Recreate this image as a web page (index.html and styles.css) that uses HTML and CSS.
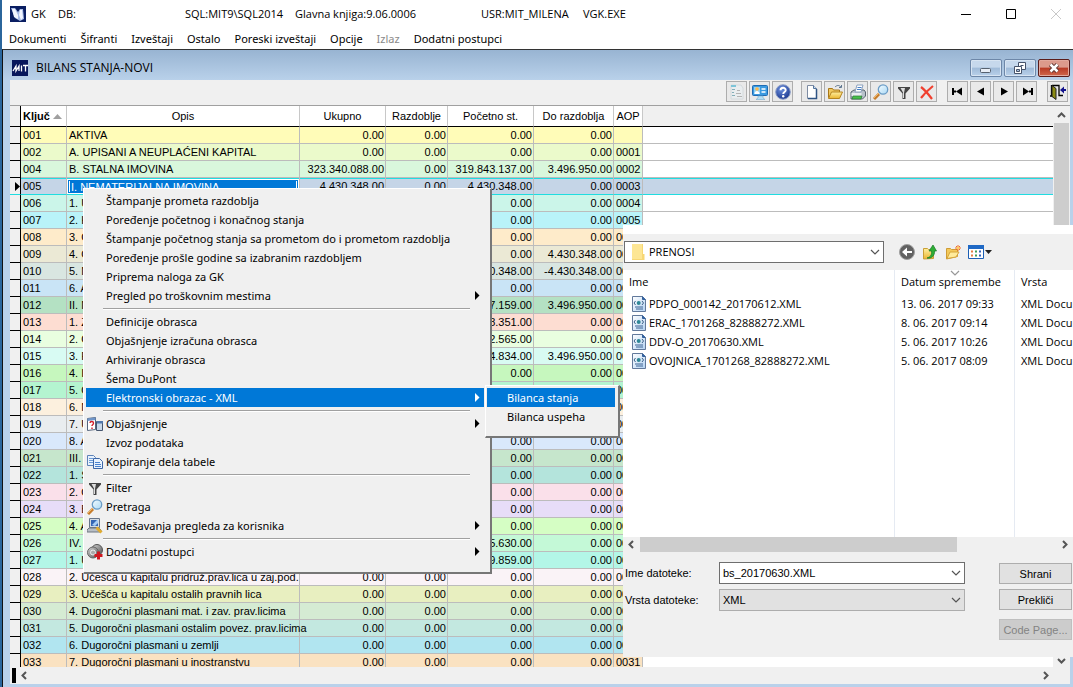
FILE: index.html
```html
<!DOCTYPE html>
<html lang="sr-Latn">
<head>
<meta charset="utf-8">
<title>GK - Bilans stanja</title>
<link rel="stylesheet" href="styles.css">
</head>
<body>
<svg class="defs" aria-hidden="true">
  <defs>
    <linearGradient id="lens" x1="0" y1="0" x2="1" y2="1"><stop offset="0" stop-color="#f4fcff"/><stop offset="1" stop-color="#a9d8f5"/></linearGradient>
    <linearGradient id="gold" x1="0" y1="0" x2="0" y2="1"><stop offset="0" stop-color="#fff0a0"/><stop offset="1" stop-color="#eab530"/></linearGradient>
    <linearGradient id="sheet" x1="0" y1="0" x2="1" y2="1"><stop offset="0" stop-color="#ffffff"/><stop offset="1" stop-color="#b4d2f2"/></linearGradient>
    <radialGradient id="ball" cx=".4" cy=".3" r=".8"><stop offset="0" stop-color="#6d92e0"/><stop offset="1" stop-color="#142f86"/></radialGradient>
    <linearGradient id="metal" x1="0" y1="0" x2="1" y2="1"><stop offset="0" stop-color="#d8d8d8"/><stop offset="1" stop-color="#505050"/></linearGradient>
    <symbol id="i-search" viewBox="0 0 16 16"><path d="M1 15l5-5" stroke="#c77d2c" stroke-width="3"/><path d="M1 14l5-5" stroke="#f1b869" stroke-width="1"/><circle cx="10" cy="5.500" r="4.700" fill="url(#lens)" stroke="#6a9cc6" stroke-width="1.300"/></symbol>
    <symbol id="i-filter" viewBox="0 0 16 16"><path d="M2 3h12v1.500L9.500 9.500V15h-3V9.500L2 4.500z" fill="#444"/><path d="M4.500 4H9L8 9v5H7V8.500z" fill="#ddd"/></symbol>
    <symbol id="i-xml" viewBox="0 0 16 16"><path d="M1.500 .5h10l3 3v12h-13z" fill="url(#sheet)" stroke="#62799b"/><path d="M11.500 .5v3h3" fill="#2d65aa" stroke="#355f98"/><path d="M4.500 5L3 7l1.500 2M11 5l1.500 2L11 9" fill="none" stroke="#3a5f86"/><circle cx="7.700" cy="7" r="2" fill="#2f8796"/><path d="M4 11h8M5 13h7" stroke="#3c6494"/></symbol>
    <symbol id="i-down" viewBox="0 0 10 6"><path d="M1 1l4 4 4-4" fill="none" stroke="#555" stroke-width="1.200"/></symbol>
    <symbol id="i-sub" viewBox="0 0 5 9"><path d="M0 0l4.500 4.500L0 9z" fill="currentColor"/></symbol>
  </defs>
</svg>
<div class="app">
  <header class="titlebar">
    <svg class="app-icon" viewBox="0 0 16 16" aria-hidden="true"><path d="M0 0h16v16H0z" fill="#0a1e62"/><path d="M1 2l4 0 3 4 2-3 3 0 1 10-4 2-5-3z" fill="#a9bde8"/><path d="M2 3l3 0 3 6 0 4-4-2zM10 4l2 0 1 8-2 2-2-5z" fill="#f2f6ff"/></svg>
    <span class="t-gk">GK</span><span class="t-db">DB:</span><span class="t-sql">SQL:MIT9\SQL2014</span><span class="t-ver">Glavna knjiga:9.06.0006</span><span class="t-usr">USR:MIT_MILENA</span><span>VGK.EXE</span>
    <div class="win-buttons">
      <button aria-label="Minimize"><svg viewBox="0 0 12 12"><path d="M1 6.500h10" stroke="#000"/></svg></button>
      <button aria-label="Maximize"><svg viewBox="0 0 12 12"><path d="M1.500 1.500h9v9h-9z" fill="none" stroke="#000"/></svg></button>
      <button aria-label="Close"><svg viewBox="0 0 12 12"><path d="M1 1l10 10M11 1L1 11" stroke="#c8c8c8"/></svg></button>
    </div>
  </header>
  <nav class="menubar">
    <button>Dokumenti</button><button>Šifranti</button><button>Izveštaji</button><button>Ostalo</button><button>Poreski izveštaji</button><button>Opcije</button><button disabled>Izlaz</button><button>Dodatni postupci</button>
  </nav>
  <main class="mdi">
    <div class="mdi-title">
      <svg class="app-icon" viewBox="0 0 16 16" aria-hidden="true"><path d="M0 0h16v16H0z" fill="#07175c"/><path d="M1 11l3-5v5l3-5v5M9.500 5.500v6M11 5.500h5M13.500 5.500v6" fill="none" stroke="#fff" stroke-width="1.300"/></svg>
      <h1>BILANS STANJA-NOVI</h1>
      <div class="mdi-buttons">
        <button aria-label="Minimize child"><svg viewBox="0 0 14 12"><rect x="1.500" y="6.500" width="10" height="4" rx="1" fill="#e8eef6" stroke="#56616f"/></svg></button>
        <button aria-label="Restore child"><svg viewBox="0 0 14 12"><path d="M5.500 .5h7v7h-7z" fill="#fff" stroke="#46536a"/><path d="M7.500 3.500h3" stroke="#46536a"/><path d="M1.500 4.500h7v7h-7z" fill="#fff" stroke="#46536a"/><path d="M3.500 7.500h3v2h-3z" fill="#a8bfdb" stroke="#46536a"/></svg></button>
        <button class="red" aria-label="Close child"><svg viewBox="0 0 14 12"><path d="M3.500 2.500l7 7M10.500 2.500l-7 7" stroke="#5b3430" stroke-width="4.500"/><path d="M3.500 2.500l7 7M10.500 2.500l-7 7" stroke="#fff" stroke-width="2.500"/></svg></button>
      </div>
    </div>
    <div class="mdi-body">
      <div class="toolbar">
        <div class="group">
          <button aria-label="Form"><svg viewBox="0 0 16 16"><path d="M2 1h10l2 3v11H2z" fill="#e9edef" stroke="#d4dadd"/><path d="M2 1h5v2H2z" fill="#7dc4d8"/><path d="M3 5.500h3M3 8.500h2M3 11.500h3" stroke="#83aeb8"/><path d="M8 6.500h3M7 9.500h5M8 12.500h5" stroke="#b4b4b4"/></svg></button>
          <button aria-label="Card"><svg viewBox="0 0 16 16"><rect x=".5" y="1.500" width="15" height="10" rx="1" fill="#3b9ae0" stroke="#1d6bb4"/><path d="M2 3h6v7H2z" fill="#8fd0f5"/><circle cx="5" cy="5" r="1.800" fill="#ffb84a"/><path d="M2.500 10c0-4 5-4 5 0z" fill="#fff"/><path d="M9.500 5h4M9.500 8h4" stroke="#fff" stroke-width="1.500"/><path d="M6 12h5v2l2 1.500H4L6 14z" fill="#b6dff5" stroke="#79afd0" stroke-width=".6"/></svg></button>
          <button aria-label="Help"><svg viewBox="0 0 16 16"><circle cx="8" cy="8" r="7.300" fill="url(#ball)" stroke="#8fa0c8"/><path d="M5.500 6.300C5.500 3 10.700 3 10.700 6.200 10.700 8 8.200 8 8.200 10" fill="none" stroke="#fff" stroke-width="1.900"/><circle cx="8.200" cy="12.300" r="1.200" fill="#fff"/></svg></button>
        </div>
        <div class="group">
          <button aria-label="New"><svg viewBox="0 0 16 16"><path d="M3.500 1.500h6l3 3v10h-9z" fill="#fff" stroke="#7d8ba2"/><path d="M12.500 5v9.500H4" fill="none" stroke="#2f5484" stroke-width="1.500"/><path d="M9.500 1.500v3h3" fill="#c5dcf4" stroke="#55749b"/></svg></button>
          <button aria-label="Open"><svg viewBox="0 0 16 16"><path d="M1.500 13.500v-9h4l1 1.500h6v7.500z" fill="#f0c860" stroke="#a87718"/><path d="M1.500 14.500L4.500 8h11l-3 6.500z" fill="url(#gold)" stroke="#b5841f"/><path d="M8 3c2-2 4-2 6 0M14.500 1v2.500H12" fill="none" stroke="#5e7690"/></svg></button>
          <button aria-label="Print"><svg viewBox="0 0 16 16"><path d="M1 8l3-2h10l1.500 2v4l-3 3H1z" fill="#b8c2cb" stroke="#596470"/><path d="M5 8l2-7h6l-2 7z" fill="#fff" stroke="#8ba0bd"/><path d="M1.500 9h10v3h-10z" fill="#e9edf1"/><path d="M3 12h9l-1 3H2z" fill="#46c04a" stroke="#2d7535" stroke-width=".7"/><path d="M7.500 3.500h4M7 5.500h4" stroke="#477fc5"/></svg></button>
          <button aria-label="Search"><svg><use href="#i-search"/></svg></button>
          <button aria-label="Filter"><svg><use href="#i-filter"/></svg></button>
          <button aria-label="Delete"><svg viewBox="0 0 16 16"><path d="M2 3c4 3 8 8 11 12M14 2C9 6 5 10 2 14" fill="none" stroke="#f0402f" stroke-width="2.200"/></svg></button>
        </div>
        <div class="group nav-group">
          <button aria-label="First"><svg viewBox="0 0 16 16"><path d="M3 4v7M4 7.500h2" stroke="#000" stroke-width="2"/><path d="M12 3.500v8L6 7.500z"/></svg></button>
          <button aria-label="Previous"><svg viewBox="0 0 16 16"><path d="M11 3.500v8L4 7.500z"/></svg></button>
          <button aria-label="Next"><svg viewBox="0 0 16 16"><path d="M5 3.500v8l7-4z"/></svg></button>
          <button aria-label="Last"><svg viewBox="0 0 16 16"><path d="M13 4v7M10 7.500h2" stroke="#000" stroke-width="2"/><path d="M4 3.500v8l6-4z"/></svg></button>
        </div>
        <div class="group nav-group">
          <button aria-label="Exit"><svg viewBox="0 0 16 16"><path d="M0 12h3M1.500 1v11M2 1.500h7v10H13" fill="none" stroke="#000" stroke-width="1.300"/><path d="M2 1.500l4 3v11l-4-3z" fill="#8b8b12" stroke="#222"/><path d="M16 5h-2V2.500L10 6l4 3.500V7h2z" fill="#12128c"/></svg></button>
        </div>
      </div>
      <div class="grid-area">
        <div class="table-wrap">
          <table class="ledger">
            <colgroup><col class="c-ind"><col class="c-key"><col class="c-desc"><col class="c-sum"><col class="c-per"><col class="c-start"><col class="c-to"><col class="c-aop"><col></colgroup>
            <thead><tr><th></th><th class="key">Ključ <svg class="sort" viewBox="0 0 9 5"><path d="M0 5l4.500-5L9 5z" fill="#a0a0a0"/></svg></th><th>Opis</th><th>Ukupno</th><th>Razdoblje</th><th>Početno st.</th><th>Do razdoblja</th><th>AOP</th><th class="rest"></th></tr></thead>
            <tbody>
<tr><td></td><td>001</td><td>AKTIVA</td><td>0.00</td><td>0.00</td><td>0.00</td><td>0.00</td><td></td><td></td></tr>
<tr><td></td><td>002</td><td>A. UPISANI A NEUPLAĆENI KAPITAL</td><td>0.00</td><td>0.00</td><td>0.00</td><td>0.00</td><td>0001</td><td></td></tr>
<tr><td></td><td>004</td><td>B. STALNA IMOVINA</td><td>323.340.088.00</td><td>0.00</td><td>319.843.137.00</td><td>3.496.950.00</td><td>0002</td><td></td></tr>
<tr class="current"><td><svg class="marker" viewBox="0 0 5 9"><path d="M0 0l5 4.500L0 9z"/></svg></td><td>005</td><td><span class="edit">I. NEMATERIJALNA IMOVINA</span></td><td>4.430.348.00</td><td>0.00</td><td>4.430.348.00</td><td>0.00</td><td>0003</td><td></td></tr>
<tr><td></td><td>006</td><td>1. U</td><td>0.00</td><td>0.00</td><td>0.00</td><td>0.00</td><td>0004</td><td></td></tr>
<tr><td></td><td>007</td><td>2. K</td><td>0.00</td><td>0.00</td><td>0.00</td><td>0.00</td><td>0005</td><td></td></tr>
<tr><td></td><td>008</td><td>3. G</td><td>0.00</td><td>0.00</td><td>0.00</td><td>0.00</td><td>0006</td><td></td></tr>
<tr><td></td><td>009</td><td>4. O</td><td>4.430.348.00</td><td>0.00</td><td>0.00</td><td>4.430.348.00</td><td>0007</td><td></td></tr>
<tr><td></td><td>010</td><td>5. N</td><td>0.00</td><td>0.00</td><td>4.430.348.00</td><td>-4.430.348.00</td><td>0008</td><td></td></tr>
<tr><td></td><td>011</td><td>6. A</td><td>0.00</td><td>0.00</td><td>0.00</td><td>0.00</td><td>0009</td><td></td></tr>
<tr><td></td><td>012</td><td>II. N</td><td>0.00</td><td>0.00</td><td>7.159.00</td><td>3.496.950.00</td><td>0010</td><td></td></tr>
<tr><td></td><td>013</td><td>1. Z</td><td>0.00</td><td>0.00</td><td>8.351.00</td><td>0.00</td><td>0011</td><td></td></tr>
<tr><td></td><td>014</td><td>2. G</td><td>0.00</td><td>0.00</td><td>2.565.00</td><td>0.00</td><td>0012</td><td></td></tr>
<tr><td></td><td>015</td><td>3. P</td><td>0.00</td><td>0.00</td><td>4.834.00</td><td>3.496.950.00</td><td>0013</td><td></td></tr>
<tr><td></td><td>016</td><td>4. I</td><td>0.00</td><td>0.00</td><td>0.00</td><td>0.00</td><td>0014</td><td></td></tr>
<tr><td></td><td>017</td><td>5. O</td><td>0.00</td><td>0.00</td><td>0.00</td><td>0.00</td><td>0015</td><td></td></tr>
<tr><td></td><td>018</td><td>6. N</td><td>0.00</td><td>0.00</td><td>0.00</td><td>0.00</td><td>0016</td><td></td></tr>
<tr><td></td><td>019</td><td>7. U</td><td>0.00</td><td>0.00</td><td>0.00</td><td>0.00</td><td>0017</td><td></td></tr>
<tr><td></td><td>020</td><td>8. A</td><td>0.00</td><td>0.00</td><td>0.00</td><td>0.00</td><td>0018</td><td></td></tr>
<tr><td></td><td>021</td><td>III. B</td><td>0.00</td><td>0.00</td><td>0.00</td><td>0.00</td><td>0019</td><td></td></tr>
<tr><td></td><td>022</td><td>1. S</td><td>0.00</td><td>0.00</td><td>0.00</td><td>0.00</td><td>0020</td><td></td></tr>
<tr><td></td><td>023</td><td>2. O</td><td>0.00</td><td>0.00</td><td>0.00</td><td>0.00</td><td>0021</td><td></td></tr>
<tr><td></td><td>024</td><td>3. B</td><td>0.00</td><td>0.00</td><td>0.00</td><td>0.00</td><td>0022</td><td></td></tr>
<tr><td></td><td>025</td><td>4. A</td><td>0.00</td><td>0.00</td><td>0.00</td><td>0.00</td><td>0023</td><td></td></tr>
<tr><td></td><td>026</td><td>IV. D</td><td>0.00</td><td>0.00</td><td>5.630.00</td><td>0.00</td><td>0024</td><td></td></tr>
<tr><td></td><td>027</td><td>1. U</td><td>0.00</td><td>0.00</td><td>9.859.00</td><td>0.00</td><td>0025</td><td></td></tr>
<tr><td></td><td>028</td><td>2. Učešća u kapitalu pridruž.prav.lica u zaj.pod.</td><td>0.00</td><td>0.00</td><td>0.00</td><td>0.00</td><td>0026</td><td></td></tr>
<tr><td></td><td>029</td><td>3. Učešća u kapitalu ostalih pravnih lica</td><td>0.00</td><td>0.00</td><td>0.00</td><td>0.00</td><td>0027</td><td></td></tr>
<tr><td></td><td>030</td><td>4. Dugoročni plasmani mat. i zav. prav.licima</td><td>0.00</td><td>0.00</td><td>0.00</td><td>0.00</td><td>0028</td><td></td></tr>
<tr><td></td><td>031</td><td>5. Dugoročni plasmani ostalim povez. prav.licima</td><td>0.00</td><td>0.00</td><td>0.00</td><td>0.00</td><td>0029</td><td></td></tr>
<tr><td></td><td>032</td><td>6. Dugoročni plasmani u zemlji</td><td>0.00</td><td>0.00</td><td>0.00</td><td>0.00</td><td>0030</td><td></td></tr>
<tr><td></td><td>033</td><td>7. Dugoročni plasmani u inostranstvu</td><td>0.00</td><td>0.00</td><td>0.00</td><td>0.00</td><td>0031</td><td></td></tr>
            </tbody>
          </table>
        </div>
        <div class="vscroll">
          <svg viewBox="0 0 9 6"><path d="M1 5l3.500-3.500L8 5" fill="none" stroke="#555" stroke-width="2"/></svg>
          <div class="vthumb"></div>
          <svg viewBox="0 0 9 6"><path d="M1 1l3.500 3.500L8 1" fill="none" stroke="#555" stroke-width="2"/></svg>
        </div>
      </div>
      <div class="hscroll"><span class="block"></span>
        <svg viewBox="0 0 6 9"><path d="M5 1L1.500 4.500 5 8" fill="none" stroke="#555" stroke-width="2"/></svg>
        <svg class="end" viewBox="0 0 6 9"><path d="M1 1l3.500 3.500L1 8" fill="none" stroke="#555" stroke-width="2"/></svg>
      </div>
    </div>
  </main>

  <section class="dialog">
    <div class="dialog-bar">
      <div class="combo folder-combo"><svg class="folder" viewBox="0 0 14 16"><path d="M1 0h11v10h1.500v6H1z" fill="#f7d774"/><path d="M1 0h10v15H1z" fill="#fde694"/></svg>
        <select aria-label="Folder"><option>PRENOSI</option></select><svg class="chev"><use href="#i-down"/></svg></div>
      <div class="dialog-icons">
        <button aria-label="Back"><svg viewBox="0 0 16 16"><circle cx="8" cy="8" r="7.500" fill="#626262" stroke="#a0a0a0"/><path d="M3 8l5-4.500V7h5v2H8v3.500z" fill="#fff"/></svg></button>
        <button aria-label="Up"><svg viewBox="0 0 16 16"><path d="M1.500 4.500h4l1 1h5v9l-10 .5z" fill="url(#gold)" stroke="#c99f36"/><path d="M5 14c4-1 5-4 4.500-7H7l4-6 3.500 6h-2C13 12 9 15 5 14z" fill="#2fae36" stroke="#147a22" stroke-width=".7"/></svg></button>
        <button aria-label="New folder"><svg viewBox="0 0 16 16"><path d="M1.500 4.500h4l1 1h6v7l-11 2.500z" fill="#f3c95a" stroke="#cf9c35"/><path d="M2 14.500l3-6.500h9l-3 5z" fill="#ffeb9c" stroke="#d6a53b"/><path d="M13 1v6M10 4h6M11 2l4 4M15 2l-4 4" stroke="#ef6b2a"/><circle cx="13" cy="4" r="1.300" fill="#ffd05a"/></svg></button>
        <button class="wide" aria-label="View"><svg viewBox="0 0 25 16"><path d="M.5 1.500h15v13H.5z" fill="#fff" stroke="#1c5fb5"/><path d="M0 1h16v4H0z" fill="#1f69c5"/><path d="M3 7.500h2M3 11.500h2" stroke="#e57d42" stroke-width="2"/><path d="M7 7.500h2M7 11.500h2" stroke="#3f9e58" stroke-width="2"/><path d="M11 7.500h2M11 11.500h2" stroke="#335fb7" stroke-width="2"/><path d="M17 6h7l-3.500 4z" fill="#222"/></svg></button>
      </div>
    </div>
    <div class="files">
      <table>
        <colgroup><col class="f-name"><col class="f-date"><col class="f-kind"></colgroup>
        <thead><tr><th>Ime</th><th><svg class="sortdown"><use href="#i-down"/></svg>Datum spremembe</th><th>Vrsta</th></tr></thead>
        <tbody>
          <tr><td><svg><use href="#i-xml"/></svg>PDPO_000142_20170612.XML</td><td>13. 06. 2017 09:33</td><td>XML Document</td></tr>
          <tr><td><svg><use href="#i-xml"/></svg>ERAC_1701268_82888272.XML</td><td>8. 06. 2017 09:14</td><td>XML Document</td></tr>
          <tr><td><svg><use href="#i-xml"/></svg>DDV-O_20170630.XML</td><td>5. 06. 2017 10:26</td><td>XML Document</td></tr>
          <tr><td><svg><use href="#i-xml"/></svg>OVOJNICA_1701268_82888272.XML</td><td>5. 06. 2017 08:09</td><td>XML Document</td></tr>
        </tbody>
      </table>
    </div>
    <div class="file-scroll"><svg viewBox="0 0 6 9"><path d="M5 1L1.500 4.500 5 8" fill="none" stroke="#555" stroke-width="2"/></svg><span></span><svg viewBox="0 0 6 9"><path d="M1 1l3.500 3.500L1 8" fill="none" stroke="#555" stroke-width="2"/></svg></div>
    <form class="save">
      <div class="fields">
        <label for="fname">Ime datoteke:</label>
        <div class="combo"><input id="fname" type="text" value="bs_20170630.XML"><svg class="chev"><use href="#i-down"/></svg></div>
        <label for="ftype">Vrsta datoteke:</label>
        <div class="combo gray"><select id="ftype"><option>XML</option></select><svg class="chev"><use href="#i-down"/></svg></div>
      </div>
      <div class="actions">
        <button type="button">Shrani</button>
        <button type="button">Prekliči</button>
        <button type="button" class="code" disabled>Code Page...</button>
      </div>
    </form>
  </section>

  <div class="menu context">
    <button>Štampanje prometa razdoblja</button>
    <button>Poređenje početnog i konačnog stanja</button>
    <button>Štampanje početnog stanja sa prometom do i prometom razdoblja</button>
    <button>Poređenje prošle godine sa izabranim razdobljem</button>
    <button>Priprema naloga za GK</button>
    <button>Pregled po troškovnim mestima<svg class="sub"><use href="#i-sub"/></svg></button>
    <hr>
    <button>Definicije obrasca</button>
    <button>Objašnjenje izračuna obrasca</button>
    <button>Arhiviranje obrasca</button>
    <button>Šema DuPont</button>
    <button class="active">Elektronski obrazac - XML<svg class="sub"><use href="#i-sub"/></svg></button>
    <hr>
    <button><svg class="ico" viewBox="0 0 16 16"><path d="M.5 2.500l8-1v12l-8 1z" fill="#fff" stroke="#54657d"/><path d="M.5 2.500l8-1v2.500l-8 1z" fill="#6f95c8"/><path d="M3 7c0-2 3.500-2 3.500 0S5 8.500 5 10M5 11.500v1.500" fill="none" stroke="#d21f2b" stroke-width="1.400"/><path d="M9.500 5.500h6v9h-6z" fill="#c8d8ea" stroke="#46566e"/><path d="M10 5h6v2.500h-6z" fill="#5278ac"/></svg>Objašnjenje<svg class="sub"><use href="#i-sub"/></svg></button>
    <button>Izvoz podataka</button>
    <button><svg class="ico" viewBox="0 0 16 16"><path d="M.5 1.500h6l2 2v8h-8z" fill="#e8f2fd" stroke="#5d82b8"/><path d="M2 4.500h4M2 6.500h4M2 8.500h4" stroke="#6a9ad8"/><path d="M6.500 4.500h6l3 3v7h-9z" fill="#e8f2fd" stroke="#3d66a6"/><path d="M8 8.500h5M8 10.500h6M8 12.500h6" stroke="#4a82cf"/></svg>Kopiranje dela tabele</button>
    <hr>
    <button><svg class="ico"><use href="#i-filter"/></svg>Filter</button>
    <button><svg class="ico"><use href="#i-search"/></svg>Pretraga</button>
    <button><svg class="ico" viewBox="0 0 16 16"><path d="M2.500 .5h10v9h-10z" fill="#d4dbe2" stroke="#66758a"/><path d="M4 2h7v6H4z" fill="#3566b5"/><path d="M5 7l5-5h1v3L8 8z" fill="#a8cdf5"/><path d="M0 12l2-2h10l2 2v2H0z" fill="#b8bec5" stroke="#6f7780"/><path d="M9.500 9.500l5 5" stroke="#e1ac2f" stroke-width="3"/></svg>Podešavanja pregleda za korisnika<svg class="sub"><use href="#i-sub"/></svg></button>
    <hr>
    <button><svg class="ico" viewBox="0 0 16 16"><circle cx="10" cy="6" r="5.500" fill="url(#metal)" stroke="#555"/><circle cx="6" cy="8.500" r="5.500" fill="url(#metal)" stroke="#666"/><circle cx="6" cy="8.500" r="2.500" fill="#aaa" stroke="#eee"/><path d="M11.500 7.500v8M7.500 11.500h8" stroke="#d01820" stroke-width="3"/></svg>Dodatni postupci<svg class="sub"><use href="#i-sub"/></svg></button>
  </div>
  <div class="menu submenu">
    <button class="active">Bilanca stanja</button>
    <button>Bilanca uspeha</button>
  </div>
</div>
</body>
</html>
```
FILE: styles.css
```css
* { box-sizing: border-box; }
html, body { height: 100%; }
body { margin: 0; overflow: hidden; background: #fff; color: #000; font: 12px/16px "Open Sans", sans-serif; }
button, input, select { font: inherit; color: inherit; margin: 0; padding: 0; border: 0; background: none; border-radius: 0; appearance: none; outline: 0; }
svg { display: block; flex: none; }
.defs { position: absolute; width: 0; height: 0; }
.app { position: relative; display: flex; flex-direction: column; height: 100vh; overflow: hidden; border-left: 2px solid #2b669c; }

.titlebar { display: flex; align-items: center; height: 28px; padding-left: 8px; white-space: nowrap; font-size: 11px; }
.app-icon { width: 16px; height: 16px; }
.t-gk { width: 27px; margin-left: 5px; flex: none; }
.t-db { width: 127px; flex: none; }
.t-sql { width: 110px; flex: none; }
.t-ver { width: 186px; flex: none; }
.t-usr { width: 102px; flex: none; }
.win-buttons { display: flex; gap: 13px; margin: 0 1px 0 auto; }
.win-buttons button { width: 32px; height: 28px; display: grid; place-items: center; }
.win-buttons svg { width: 12px; height: 12px; }
.menubar { display: flex; gap: 14px; height: 21px; padding-left: 7px; font-family: "Noto Sans", "Open Sans", sans-serif; font-size: 11px; white-space: nowrap; }
.menubar button:disabled { color: #8a8a8a; }

.mdi { flex: 1; min-height: 0; display: flex; flex-direction: column; border-top: 1px solid #333; border-left: 1px solid #111; background: #b9d1ea; }
.mdi-title { display: flex; align-items: center; height: 30px; padding: 5px 3px 0 9px; background: linear-gradient(#98b4d2, #b9d1ea); flex: none; }
.mdi-title h1 { margin: 0 0 0 8px; font-size: 12px; font-weight: 400; }
.mdi-buttons { display: flex; gap: 2px; margin-left: auto; }
.mdi-buttons button { width: 32px; height: 18px; display: grid; place-items: center; border: 1px solid #6d87a8; border-radius: 2px; background: linear-gradient(#c6d8ec 45%, #9fbad8 50%, #b9d1ea); box-shadow: inset 0 0 0 1px #d7e4f2; }
.mdi-buttons .red { border-color: #5a1c1a; background: linear-gradient(#dc9a8c 45%, #b83a25 50%, #d0684c); box-shadow: inset 0 0 0 1px #e2a99d; }
.mdi-buttons svg { width: 14px; height: 12px; }
.mdi-body { flex: 1; min-height: 0; display: flex; flex-direction: column; margin: 0 3px 3px 7px; background: #f0f0f0; }
.toolbar { display: flex; justify-content: flex-end; gap: 8px; height: 25px; padding: 1px 2px 0 0; flex: none; }
.group { display: flex; gap: 2px; }
.nav-group { margin-left: 2px; }
.group button { width: 21px; height: 21px; display: grid; place-items: center; border: 1px solid #adadad; background: #e9e9e9; }
.group svg { width: 16px; height: 16px; }

.grid-area { flex: 1; min-height: 0; display: flex; border-top: 1px solid #a0a0a0; }
.table-wrap { flex: 1; min-width: 0; overflow: hidden; background: #fff; }
.ledger { width: 100%; table-layout: fixed; border-spacing: 0; font: 11px/16px "Liberation Sans", Arial, sans-serif; white-space: nowrap; }
.c-ind { width: 11px; } .c-key { width: 46px; } .c-desc { width: 233px; } .c-sum, .c-start { width: 86px; } .c-per { width: 62px; } .c-to { width: 80px; } .c-aop { width: 29px; }
.ledger th { height: 21px; padding: 0; font-weight: 400; background: #fff; border-right: 1px solid #c8c8c8; border-bottom: 1px solid #000; }
.ledger th.key { font-weight: 700; text-align: left; padding-left: 2px; }
.ledger .sort { display: inline-block; width: 9px; height: 5px; vertical-align: 1px; }
.ledger th.rest { background: #f0f0f0; border-right: 0; }
.ledger td { height: 17px; padding: 0 1px 0 2px; text-align: right; overflow: hidden; border-right: 1px solid #bcbcbc; border-bottom: 1px solid #bcbcbc; }
.ledger td:nth-child(2), .ledger td:nth-child(3), .ledger td:nth-child(8) { text-align: left; }
.ledger td:nth-child(3) { padding-right: 0; overflow: visible; }
.ledger td:last-child { background: #fff; border-right: 0; }
.ledger td:first-child { background: #f0f0f0; border-bottom-color: #000; }
.ledger tr > :first-child { border-right-color: #000; }
.ledger th:first-child { background: #f0f0f0; }
.ledger .current td { border-bottom-color: #20dce0; box-shadow: inset 0 1px #20dce0; }
.ledger .current td:last-child { background: #c5d5e7; }
.ledger .current td:first-child { padding: 0; box-shadow: none; }
.ledger .current td:nth-child(3) { padding: 0; }
.marker { width: 5px; height: 9px; margin-left: auto; }
.edit { display: block; height: 15px; margin-top: 1px; line-height: 15px; border: 1px solid #fff; border-width: 1px 3px; background: #0078d7; color: #fff; outline: 1px solid #0078d7; outline-offset: -2px; padding-left: 1px; }
.ledger tbody tr:nth-child(1) { background: #fffcb8; }
.ledger tbody tr:nth-child(2) { background: #ebfacb; }
.ledger tbody tr:nth-child(3) { background: #d9f7dc; }
.ledger tbody tr:nth-child(4) { background: #c5d5e7; }
.ledger tbody tr:nth-child(5) { background: #cbf5e9; }
.ledger tbody tr:nth-child(6) { background: #b9f3f9; }
.ledger tbody tr:nth-child(7) { background: #feebca; }
.ledger tbody tr:nth-child(8) { background: #ebe9d5; }
.ledger tbody tr:nth-child(9) { background: #d9e6e1; }
.ledger tbody tr:nth-child(10) { background: #c9e4f6; }
.ledger tbody tr:nth-child(11) { background: #b4e1c3; }
.ledger tbody tr:nth-child(12) { background: #fdddd2; }
.ledger tbody tr:nth-child(13) { background: #e9fee0; }
.ledger tbody tr:nth-child(14) { background: #d8fbf3; }
.ledger tbody tr:nth-child(15) { background: #c6f7be; }
.ledger tbody tr:nth-child(16) { background: #b4f4d0; }
.ledger tbody tr:nth-child(17) { background: #fcf0de; }
.ledger tbody tr:nth-child(18) { background: #e9edef; }
.ledger tbody tr:nth-child(19) { background: #d9e8fb; }
.ledger tbody tr:nth-child(20) { background: #c6e6cc; }
.ledger tbody tr:nth-child(21) { background: #b4e4dc; }
.ledger tbody tr:nth-child(22) { background: #fae0ea; }
.ledger tbody tr:nth-child(23) { background: #e7ddf8; }
.ledger tbody tr:nth-child(24) { background: #d5fec4; }
.ledger tbody tr:nth-child(25) { background: #c4f9d7; }
.ledger tbody tr:nth-child(26) { background: #b3f6e7; }
.ledger tbody tr:nth-child(27) { background: #faf3f7; }
.ledger tbody tr:nth-child(28) { background: #e8efc0; }
.ledger tbody tr:nth-child(29) { background: #d5ebd3; }
.ledger tbody tr:nth-child(30) { background: #c3e8e0; }
.ledger tbody tr:nth-child(31) { background: #b1e5f0; }
.ledger tbody tr:nth-child(32) { background: #fae2c1; }

.vscroll { width: 17px; display: flex; flex-direction: column; align-items: center; padding: 6px 0 3px; }
.vscroll svg { width: 9px; height: 6px; }
.vthumb { width: 15px; margin: 5px 0; flex: 1; background: #cdcdcd; }
.hscroll { display: flex; align-items: center; height: 17px; padding: 0 21px 0 2px; flex: none; }
.hscroll .block { width: 4px; height: 15px; margin-right: 5px; background: #000; }
.hscroll svg { width: 6px; height: 9px; }
.hscroll .end { margin-left: auto; }

.dialog { position: absolute; left: 621px; right: 0; top: 225px; bottom: 30px; display: flex; flex-direction: column; background: #f0f0f0; border-top: 9px solid #fff; font-size: 11px; }
.dialog-bar { display: flex; align-items: center; gap: 15px; height: 36px; padding: 0 1px; flex: none; }
.combo { display: flex; align-items: center; position: relative; height: 22px; border: 1px solid #6e6e6e; background: #fff; padding: 0 3px 0 4px; }
.combo input, .combo select { flex: 1; min-width: 0; height: 20px; }
.combo .chev { width: 10px; height: 6px; pointer-events: none; }
.combo.gray { background: #e1e1e1; border-color: #adadad; }
.folder-combo { width: 260px; padding-left: 6px; gap: 4px; }
.folder { width: 14px; height: 16px; }
.dialog-icons { display: flex; align-items: center; gap: 7px; }
.dialog-icons button { width: 16px; height: 16px; }
.dialog-icons svg { width: 16px; height: 16px; }
.dialog-icons .wide, .dialog-icons .wide svg { width: 25px; }
.files { flex: 1; min-height: 0; overflow: hidden; background: linear-gradient(90deg, #fff 271px, #e5eaf2 271px 272px, #fff 272px 391px, #e5eaf2 391px 392px, #fff 392px); }
.files table { table-layout: fixed; width: 512px; border-spacing: 0; white-space: nowrap; }
.f-name { width: 272px; } .f-date, .f-kind { width: 120px; }
.files th, .files td { text-align: left; font-weight: 400; height: 19px; line-height: 19px; padding: 0 6px; }
.files th { height: 24px; padding-bottom: 2px; position: relative; }
.files td:first-child { padding-left: 8px; }
.files td svg { display: inline-block; width: 16px; height: 16px; margin-right: 2px; vertical-align: -4px; }
.sortdown { position: absolute; top: 0; left: 55px; width: 10px; height: 6px; opacity: .6; }
.file-scroll { display: flex; align-items: center; gap: 6px; height: 15px; padding: 0 5px; flex: none; }
.file-scroll svg { width: 6px; height: 9px; }
.file-scroll span { width: 72%; height: 15px; background: #cdcdcd; }
.file-scroll svg:last-child { margin-left: auto; }
.save { display: flex; justify-content: space-between; padding: 10px 1px 17px 2px; gap: 12px; font: 11px/16px "Liberation Sans", Arial, sans-serif; flex: none; }
.fields { display: grid; grid-template-columns: 94px 246px; grid-auto-rows: 22px; row-gap: 5px; align-items: center; align-self: start; }
.fields input, .fields select { margin-left: -1px; }
.actions { display: flex; flex-direction: column; gap: 5px; width: 73px; padding-top: 1px; }
.actions button { height: 21px; border: 1px solid #adadad; background: #e1e1e1; white-space: nowrap; }
.actions .code { margin-top: 4px; color: #838383; background: #cccccc; border-color: #bfbfbf; }

.menu { position: absolute; display: flex; flex-direction: column; background: #f0f0f0; border: 1px solid #fff; border-right: 2px solid #777; border-bottom: 2px solid #777; font-family: "Noto Sans", "Open Sans", sans-serif; font-size: 11px; }
.menu button { display: flex; align-items: center; position: relative; height: 19px; padding-left: 20px; text-align: left; white-space: nowrap; }
.menu .active { background: #0078d7; color: #fff; }
.menu hr { width: calc(100% - 31px); height: 1px; margin: 3px 0 3px 17px; border: 0; background: #a0a0a0; box-shadow: 0 1px #fff; }
.menu .ico { position: absolute; left: 1px; width: 16px; height: 16px; }
.menu .sub { margin-left: auto; margin-right: 4px; width: 5px; height: 9px; }
.context { left: 81px; top: 188px; width: 409px; padding: 2px 6px 11px 2px; }
.submenu { left: 483px; top: 385px; width: 135px; padding: 2px 3px 10px 1px; }
```
